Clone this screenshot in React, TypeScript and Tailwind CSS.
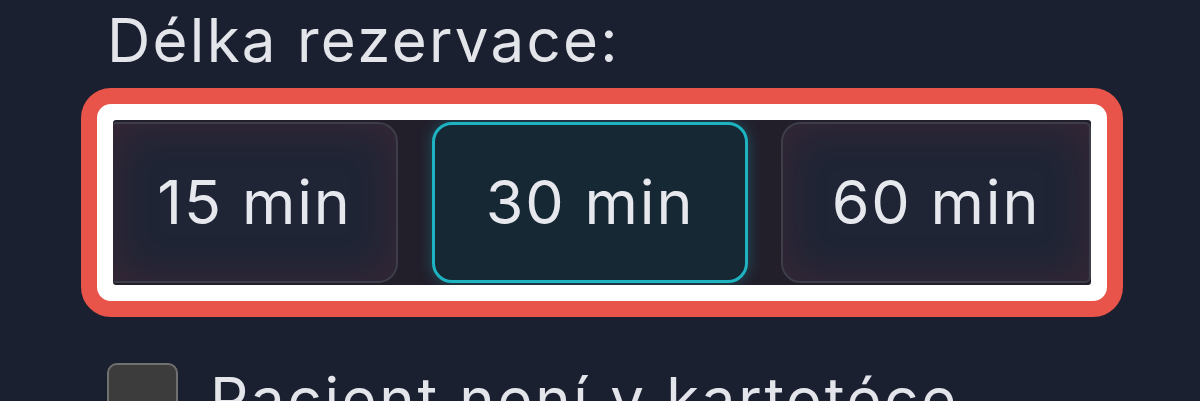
// Reservation length picker, shown with the red/white highlight outline around the options.

const FONT = "font-['Inter','Noto_Sans',sans-serif]";

function DurationButton({
  label,
  selected,
  className,
}: {
  label: string;
  selected?: boolean;
  className: string;
}) {
  return (
    <button
      type="button"
      className={
        `flex h-[161px] shrink-0 items-center justify-center ${FONT} text-[61px] leading-none tracking-[0.03em] text-[#e6e8ee] ` +
        (selected
          ? "border-[3px] border-[#1db3c0] bg-[#162833] shadow-[0_0_14px_rgba(29,179,192,0.35)] "
          : "border-2 border-[#3d3e49] bg-[#1f2535] shadow-[inset_0_0_44px_rgba(120,45,55,0.32)] ") +
        className
      }
    >
      {label}
    </button>
  );
}

export default function App() {
  return (
    <div className="h-[401px] w-[1200px] overflow-hidden bg-[#1a2030]">
      <div className="flex flex-col pt-[10px]">
        <div className={`pl-[107px] text-[60px] leading-none tracking-[0.038em] text-[#e3e5ea] ${FONT}`}>
          Délka rezervace:
        </div>

        {/* highlight outline: red ring, then white ring, then the segmented control */}
        <div className="ml-[81px] mt-[18px] w-[1042px] rounded-[30px] border-[16px] border-[#e8534a] bg-white p-4">
          <div className="flex h-[165px] items-center gap-[34px] overflow-hidden rounded-[3px] bg-[#221f2b]">
            <DurationButton label="15 min" className="w-[285px] rounded-l-[3px] rounded-r-[20px] border-l-0" />
            <DurationButton label="30 min" selected className="w-[316px] rounded-[20px]" />
            <DurationButton label="60 min" className="-ml-px w-[310px] rounded-l-[20px] rounded-r-[6px]" />
          </div>
        </div>

        <label className={`mt-[46px] flex items-start gap-[32px] pl-[107px] ${FONT}`}>
          <span className="h-[72px] w-[71px] shrink-0 rounded-[10px] border-2 border-[#707070] bg-[#3c3c3c]" />
          <span className="mt-[6px] text-[60px] leading-none tracking-[0.045em] text-[#e3e5ea]">
            Pacient není v kartotéce
          </span>
        </label>
      </div>
    </div>
  );
}
